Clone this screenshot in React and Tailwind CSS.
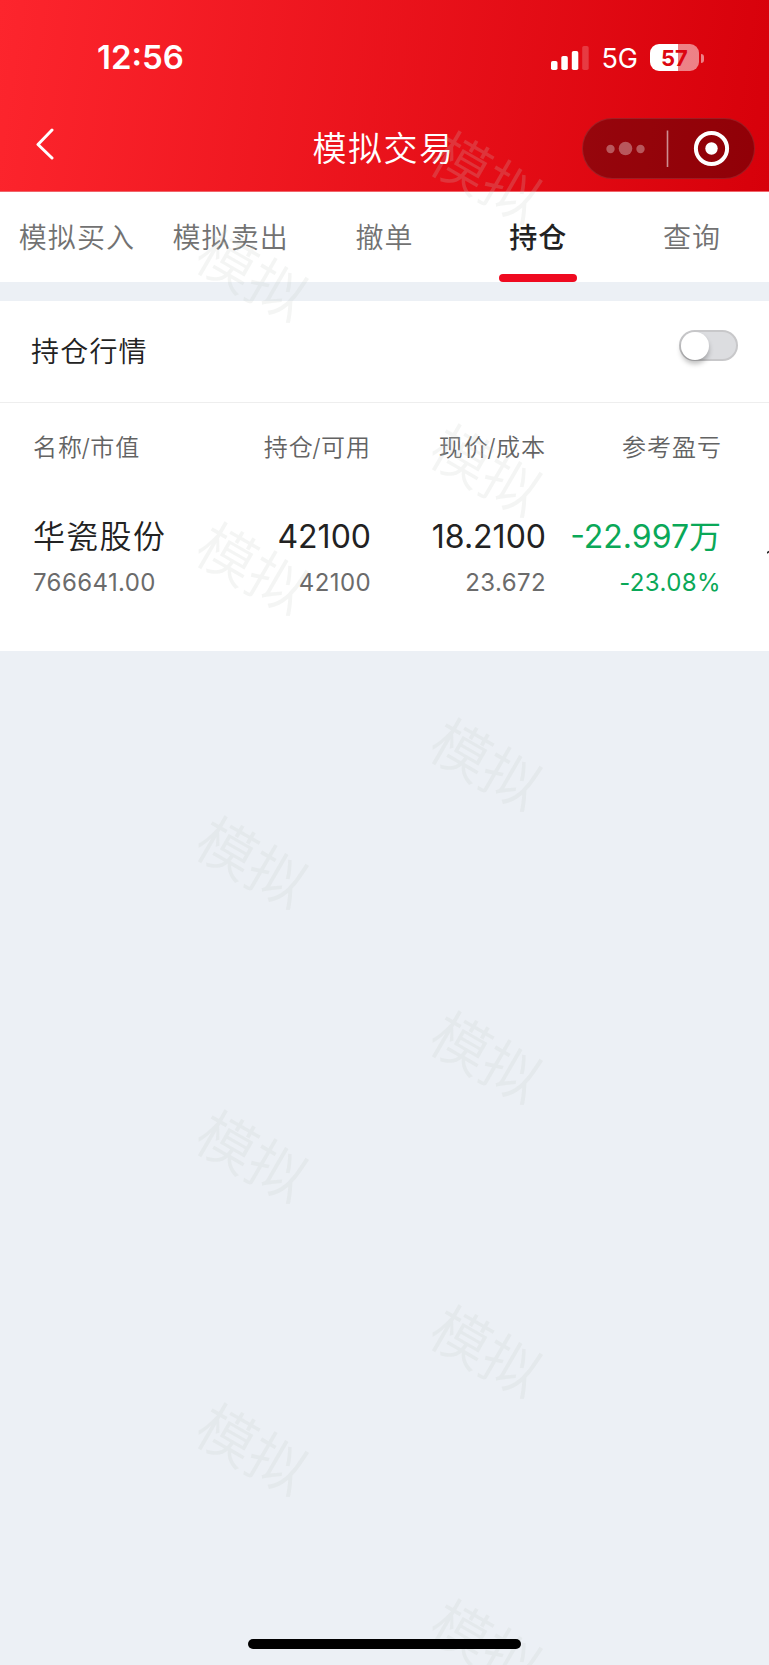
import React, { useState } from 'react';

const tabs = ['模拟买入', '模拟卖出', '撤单', '持仓', '查询'];

const holdings = [
  {
    name: '华瓷股份',
    marketValue: '766641.00',
    amount: '42100',
    available: '42100',
    price: '18.2100',
    cost: '23.672',
    profit: '-22.997万',
    profitRate: '-23.08%',
  },
];

const marks = [
  { x: 486, y: 178 },
  { x: 252, y: 276 },
  { x: 486, y: 471 },
  { x: 252, y: 569 },
  { x: 486, y: 765 },
  { x: 252, y: 863 },
  { x: 486, y: 1058 },
  { x: 252, y: 1157 },
  { x: 486, y: 1352 },
  { x: 252, y: 1450 },
  { x: 486, y: 1646 },
];

const StatusBar = () => (
  <div className="flex h-[116px] items-center justify-between pl-[97px] pr-[65px] text-white">
    <span className="mt-[-1px] text-[33px] font-semibold leading-none">12:56</span>
    <div className="flex items-center">
      <svg width="38" height="24" viewBox="0 0 38 24" fill="currentColor">
        <rect x="0" y="15" width="6.5" height="9" rx="1.8" />
        <rect x="10.3" y="10" width="6.5" height="14" rx="1.8" />
        <rect x="20.8" y="5" width="6.5" height="19" rx="1.8" />
        <rect x="31.2" y="0" width="6.5" height="24" rx="1.8" opacity="0.2" />
      </svg>
      <span className="ml-3 text-[27px] leading-none">5G</span>
      <div className="relative ml-3 mt-[-1px] flex h-[27px] w-[49px] items-center justify-center overflow-hidden rounded-[9px] bg-linear-to-r from-white from-58% to-white/50 to-58%">
        <span className="text-[22px] font-bold leading-none text-[#dc0610]">57</span>
      </div>
      <span className="ml-[2px] h-[9px] w-[3px] rounded-r-full bg-white/50"></span>
    </div>
  </div>
);

const TitleBar = () => (
  <div className="grid h-[75px] grid-cols-[1fr_auto_1fr] items-center text-white">
    <svg className="ml-9 mt-[-20px]" width="18" height="32" viewBox="0 0 18 32" fill="none" stroke="currentColor" strokeWidth="3" strokeLinecap="round" strokeLinejoin="round">
      <path d="M16 2 L2 16.5 L16 30" />
    </svg>
    <h1 className="ml-[-2px] mt-[-9px] text-[34px] font-[350] leading-none tracking-[1.5px]">模拟交易</h1>
    <div className="mr-[14px] mt-[-10px] flex h-[61px] w-[173px] items-center justify-self-end rounded-full border border-white/10 bg-black/33">
      <svg width="171" height="59" viewBox="0 0 171 59" fill="none">
        <g fill="#fff" opacity="0.33">
          <circle cx="27.5" cy="30" r="4.2" />
          <circle cx="42.5" cy="29.5" r="6.8" />
          <circle cx="57.5" cy="30" r="4.2" />
        </g>
        <path d="M84.5 11.5 V48" stroke="#fff" strokeOpacity="0.55" strokeWidth="1.6" />
        <circle cx="128.5" cy="29.5" r="15.6" stroke="#fff" strokeWidth="4" />
        <circle cx="128.5" cy="29.5" r="6.2" fill="#fff" />
      </svg>
    </div>
  </div>
);

const Slash = () => <span className="ml-[-1.5px] mr-[-0.5px]">/</span>;

const Cell = ({ top, bottom, color, subColor }) => (
  <div className="flex flex-col items-end">
    <p className={`whitespace-nowrap text-[32px] leading-[46px] ${color}`}>{top}</p>
    <p className={`text-2xl leading-[46px] tracking-[0.4px] ${subColor}`}>{bottom}</p>
  </div>
);

const App = () => {
  const [active, setActive] = useState(3);
  const [live, setLive] = useState(false);

  return (
    <div className="relative flex h-[1665px] w-[769px] flex-col overflow-hidden bg-[#ecf0f5] font-['Inter','Noto_Sans_CJK_SC',sans-serif] text-[#222]">
      <header className="h-[192px] border-b border-[#f0656b] bg-linear-[98deg] from-[#fd252d] to-[#d7000a]">
        <StatusBar />
        <TitleBar />
      </header>

      <nav className="grid h-[90px] grid-cols-5 bg-white">
        {tabs.map((tab, i) => (
          <button
            key={tab}
            onClick={() => setActive(i)}
            className={`flex flex-col items-center justify-between pt-[25px] text-[28px] leading-[42px] tracking-[1.1px] ${i === active ? 'font-medium text-[#222]' : 'font-[350] text-[#727272]'}`}
          >
            {tab}
            {i === active && <span className="h-2 w-[78px] rounded-full bg-[#ef0a20]"></span>}
          </button>
        ))}
      </nav>

      <section className="mt-[19px] h-[350px] bg-white">
        <div className="flex h-[102px] items-center justify-between border-b border-[#eee] pl-[31px] pr-[31px]">
          <h2 className="text-[28px] font-[350] leading-none tracking-[1.2px]">持仓行情</h2>
          <button
            onClick={() => setLive(!live)}
            aria-label="持仓行情"
            className={`mt-[-12px] flex h-[31px] w-[59px] items-center rounded-full border-2 border-[#c8c8ca] bg-[#dcdde0] ${live ? 'justify-end' : ''}`}
          >
            <span className="size-7 shrink-0 rounded-full bg-white shadow-[0_4px_5px_rgba(0,0,0,0.25)]"></span>
          </button>
        </div>

        <div className="grid grid-cols-[170px_168px_175px_176px] pl-[33px] pt-[27px] text-right text-2xl font-[350] leading-9 tracking-[1px] text-[#636363]">
          <span className="text-left">名称<Slash />市值</span>
          <span>持仓<Slash />可用</span>
          <span>现价<Slash />成本</span>
          <span>参考盈亏</span>
        </div>

        {holdings.map((item) => (
          <div key={item.name} className="grid grid-cols-[170px_168px_175px_175px] pl-[33px] pt-12">
            <div>
              <p className="text-[32px] font-[350] leading-[46px] tracking-[1.3px]">{item.name}</p>
              <p className="text-2xl leading-[46px] tracking-[0.4px] text-[#6b6b6b]">{item.marketValue}</p>
            </div>
            <Cell top={item.amount} bottom={item.available} color="text-[#222]" subColor="text-[#6b6b6b]" />
            <Cell top={item.price} bottom={item.cost} color="text-[#222]" subColor="text-[#6b6b6b]" />
            <Cell top={item.profit} bottom={item.profitRate} color="text-[#0aa858]" subColor="text-[#0aa858]" />
          </div>
        ))}
      </section>

      {/* next column peeking in from the right */}
      <svg className="absolute right-0 top-[550px]" width="2" height="4" viewBox="0 0 2 4">
        <path d="M0 3 L2 1.5" stroke="#222" strokeWidth="1.6" />
      </svg>

      {/* watermark */}
      <div className="pointer-events-none absolute inset-0">
        {marks.map((m) => (
          <span
            key={`${m.x}-${m.y}`}
            className="absolute -translate-1/2 rotate-30 whitespace-nowrap text-[58px] font-[350] leading-none text-[#c8ccc8]/20"
            style={{ left: m.x, top: m.y }}
          >
            模拟
          </span>
        ))}
      </div>

      <div className="absolute bottom-[16px] left-[248px] h-[10px] w-[273px] rounded-full bg-black"></div>
    </div>
  );
};

export default App;
